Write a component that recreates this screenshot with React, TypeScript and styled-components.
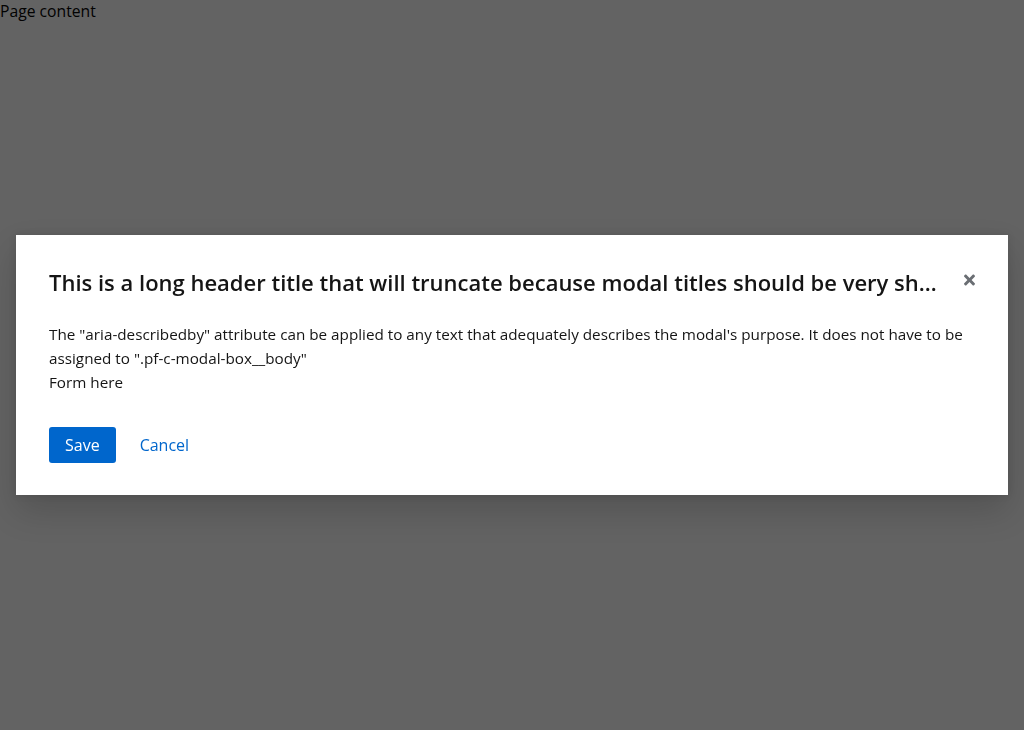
import React from "react";
import styled, { createGlobalStyle } from "styled-components";

const GlobalStyle = createGlobalStyle`
    html, body {
        margin: 0;
        padding: 0;
    }
    body {
        font-family: "Open Sans", "Liberation Sans", sans-serif;
        font-size: 16px;
        line-height: 1.5;
        color: #151515;
        background: #fff;
    }
`;

const PageContent = styled.div`
    color: #000;
    font-size: 15.7px;
`;

const Backdrop = styled.div`
    position: fixed;
    inset: 0;
    background: rgba(3, 3, 3, 0.62);
    display: flex;
    align-items: center;
    justify-content: center;
    padding: 0 16px;
`;

const ModalBox = styled.div`
    position: relative;
    width: 100%;
    background: #fff;
    padding: 32px 0;
    box-shadow: 0 16px 32px 0 rgba(3, 3, 3, 0.16), 0 0 8px 0 rgba(3, 3, 3, 0.1);
`;

const Header = styled.header`
    padding: 0 33px;
    padding-right: 64px;
`;

const Title = styled.h1`
    margin: 0;
    font-family: "Open Sans", "Liberation Sans", sans-serif;
    font-size: 22px;
    font-weight: 600;
    line-height: 31px;
    color: #151515;
    white-space: nowrap;
    overflow: hidden;
    text-overflow: ellipsis;
`;

const CloseButton = styled.button`
    position: absolute;
    top: 27px;
    right: 21px;
    width: 36px;
    height: 36px;
    border: 0;
    background: transparent;
    display: flex;
    align-items: center;
    justify-content: center;
    color: #6a6e73;
    cursor: pointer;
    padding: 0;
`;

const Body = styled.div`
    padding: 0 33px;
    margin-top: 24px;
    font-size: 15.25px;
    line-height: 24px;
`;

const Footer = styled.footer`
    display: flex;
    align-items: center;
    gap: 8px;
    padding: 0 33px;
    margin-top: 33px;
`;

const Button = styled.button<{ $variant: "primary" | "link" }>`
    font-family: inherit;
    font-size: 16px;
    line-height: 24px;
    padding: 6px 16px;
    border: 0;
    border-radius: 3px;
    cursor: pointer;
    color: ${(p) => (p.$variant === "primary" ? "#fff" : "#06c")};
    background: ${(p) => (p.$variant === "primary" ? "#06c" : "transparent")};
`;

function TimesIcon() {
    return (
        <svg width="11" height="16" viewBox="0 0 352 512" fill="currentColor" aria-hidden="true">
            <path d="M242.72 256l100.07-100.07c12.28-12.28 12.28-32.19 0-44.48l-22.24-22.24c-12.28-12.28-32.19-12.28-44.48 0L176 189.28 75.93 89.21c-12.28-12.28-32.19-12.28-44.480 0L9.21 111.45c-12.28 12.28-12.28 32.19 0 44.48L109.28 256 9.21 356.07c-12.28 12.28-12.28 32.19 0 44.48l22.24 22.24c12.28 12.28 32.2 12.28 44.48 0L176 322.72l100.07 100.07c12.28 12.28 32.2 12.28 44.48 0l22.24-22.24c12.28-12.28 12.28-32.19 0-44.48L242.72 256z" />
        </svg>
    );
}

export default function App() {
    return (
        <>
            <GlobalStyle />
            <PageContent>Page content</PageContent>

            <Backdrop>
                <ModalBox role="dialog" aria-modal="true">
                    <CloseButton aria-label="Close">
                        <TimesIcon />
                    </CloseButton>
                    <Header>
                        <Title>
                            This is a long header title that will truncate because modal titles should be very short. Use the modal body to provide more info.
                        </Title>
                    </Header>
                    <Body>
                        The "aria-describedby" attribute can be applied to any text that adequately describes the modal's purpose. It does not have to be assigned to ".pf-c-modal-box__body"
                        <br />
                        Form here
                    </Body>
                    <Footer>
                        <Button $variant="primary">Save</Button>
                        <Button $variant="link">Cancel</Button>
                    </Footer>
                </ModalBox>
            </Backdrop>
        </>
    );
}
